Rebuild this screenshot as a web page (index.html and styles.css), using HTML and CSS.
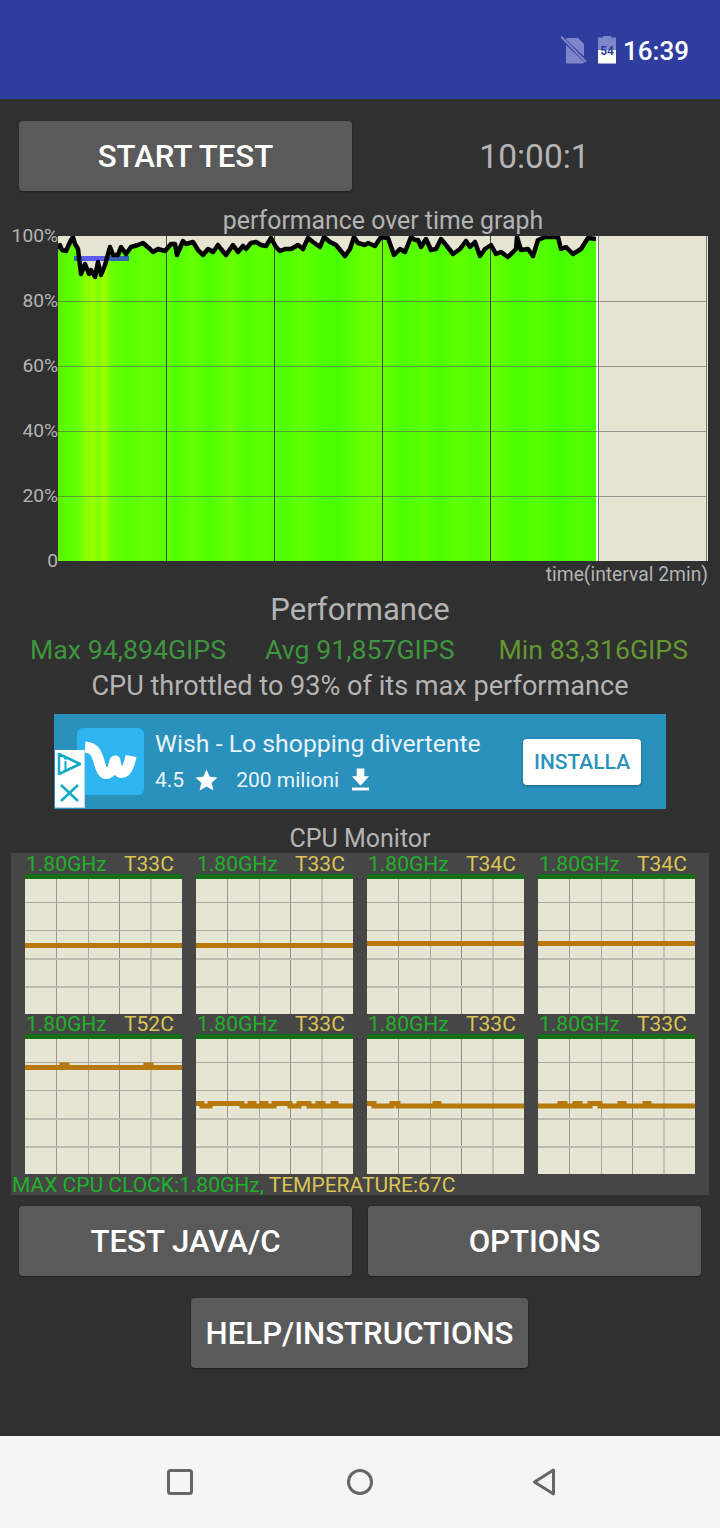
FILE: index.html
```html
<!DOCTYPE html>
<html>
<head>
	<meta charset="utf-8">
	<title>CPU Throttling Test</title>
	<link rel="stylesheet" href="styles.css">
</head>
<body>
	<div class="status">
		<svg class="nosim" width="26" height="30" viewBox="0 0 26 30">
			<path d="M6 3h11l6 6v18a1.500 1.500 0 0 1-1.500 1.500h-15a1.500 1.500 0 0 1-1.500-1.500V4.500A1.500 1.500 0 0 1 6 3z" fill="#7c86c8"/>
			<path d="M0 2.500L26 27" stroke="#2f3e9e" stroke-width="4"/>
			<path d="M0 1.500L25 27" stroke="#7c86c8" stroke-width="2"/>
		</svg>
		<div class="battery"><span class="battery-level">54</span></div>
		<span class="clock">16:39</span>
	</div>

	<div class="main">
		<div class="btn-row">
			<div class="btn">START TEST</div>
			<div class="timer">10:00:1</div>
		</div>

		<div class="graph-title">performance over time graph</div>
		<div class="graph">
			<div class="axis">
				<span>100%</span><span>80%</span><span>60%</span><span>40%</span><span>20%</span><span>0</span>
			</div>
			<svg class="plot-main" width="650" height="325" viewBox="0 0 650 325">
				<defs>
					<linearGradient id="stripes" gradientUnits="userSpaceOnUse" x1="0" y1="0" x2="538" y2="0">
						<stop offset="0" stop-color="#5ff000"/>
						<stop offset="0.02" stop-color="#58ff00"/>
						<stop offset="0.04" stop-color="#6cff00"/>
						<stop offset="0.055" stop-color="#8cff00"/>
						<stop offset="0.067" stop-color="#9aff00"/>
						<stop offset="0.075" stop-color="#7cff00"/>
						<stop offset="0.085" stop-color="#a0ff00"/>
						<stop offset="0.1" stop-color="#66ff00"/>
						<stop offset="0.13" stop-color="#58ff00"/>
						<stop offset="0.16" stop-color="#64ff00"/>
						<stop offset="0.2" stop-color="#5cff00"/>
						<stop offset="0.22" stop-color="#50ff00"/>
						<stop offset="0.25" stop-color="#66ff00"/>
						<stop offset="0.28" stop-color="#4eff00"/>
						<stop offset="0.32" stop-color="#6aff00"/>
						<stop offset="0.35" stop-color="#50ff00"/>
						<stop offset="0.38" stop-color="#60ff00"/>
						<stop offset="0.42" stop-color="#4cff00"/>
						<stop offset="0.45" stop-color="#62ff00"/>
						<stop offset="0.49" stop-color="#50ff00"/>
						<stop offset="0.52" stop-color="#48ff00"/>
						<stop offset="0.56" stop-color="#64ff00"/>
						<stop offset="0.6" stop-color="#6cff00"/>
						<stop offset="0.64" stop-color="#4cff00"/>
						<stop offset="0.68" stop-color="#5cff00"/>
						<stop offset="0.71" stop-color="#4aff00"/>
						<stop offset="0.74" stop-color="#60ff00"/>
						<stop offset="0.78" stop-color="#50ff00"/>
						<stop offset="0.81" stop-color="#68ff00"/>
						<stop offset="0.85" stop-color="#4aff00"/>
						<stop offset="0.89" stop-color="#58ff00"/>
						<stop offset="0.93" stop-color="#44ff00"/>
						<stop offset="0.97" stop-color="#52ff00"/>
						<stop offset="1" stop-color="#46ff00"/>
					</linearGradient>
				</defs>
				<rect width="650" height="325" fill="#e6e4d2"/>
				<polygon fill="url(#stripes)" points="0,13 2,9 4,14 8,15 13,4 15,1 17,8 20,13 23,38 27,28 31,38 33,34 37,41 40,26 43,39 47,29 52,11 55,19 60,19 63,11 68,18 73,11 80,9 85,7 92,13 95,16 100,13 107,15 113,8 117,8 119,19 125,5 128,8 135,6 140,14 145,19 150,13 155,16 160,9 163,13 168,19 175,9 180,16 185,10 188,13 193,7 198,6 203,9 208,10 213,2 218,11 222,15 227,13 233,13 240,9 245,13 250,2 255,6 262,11 266,1 272,6 278,9 287,20 292,13 296,1 300,7 307,9 310,7 317,10 323,1 330,2 336,19 342,13 347,16 353,1 357,4 360,4 363,11 368,3 373,14 378,13 383,3 388,9 395,18 402,13 408,5 412,11 417,6 422,20 427,13 433,9 438,18 443,16 450,21 458,13 459,1 463,14 470,13 475,20 480,4 487,1 500,1 503,13 508,11 515,18 523,13 530,2 538,3 538,325 0,325"/>
				<rect x="538" width="2" height="325" fill="#f4f4ea"/>
				<g stroke="#555" stroke-opacity="0.55" stroke-width="1">
					<path d="M0 65.500H648M0 130.500H648M0 195.500H648M0 260.500H648"/>
				</g>
				<g stroke="#444" stroke-width="1">
					<path d="M108.500 0V325M216.500 0V325M324.500 0V325M432.500 0V325"/>
				</g>
				<path d="M540.500 0V325M648.500 0V325" stroke="#777" stroke-width="1"/>
				<rect x="16" y="20" width="55" height="5" fill="#2626ff" fill-opacity="0.72"/>
				<polyline fill="none" stroke="#000" stroke-width="4.500" stroke-linejoin="round" points="0,13 2,9 4,14 8,15 13,4 15,1 17,8 20,13 23,38 27,28 31,38 33,34 37,41 40,26 43,39 47,29 52,11 55,19 60,19 63,11 68,18 73,11 80,9 85,7 92,13 95,16 100,13 107,15 113,8 117,8 119,19 125,5 128,8 135,6 140,14 145,19 150,13 155,16 160,9 163,13 168,19 175,9 180,16 185,10 188,13 193,7 198,6 203,9 208,10 213,2 218,11 222,15 227,13 233,13 240,9 245,13 250,2 255,6 262,11 266,1 272,6 278,9 287,20 292,13 296,1 300,7 307,9 310,7 317,10 323,1 330,2 336,19 342,13 347,16 353,1 357,4 360,4 363,11 368,3 373,14 378,13 383,3 388,9 395,18 402,13 408,5 412,11 417,6 422,20 427,13 433,9 438,18 443,16 450,21 458,13 459,1 463,14 470,13 475,20 480,4 487,1 500,1 503,13 508,11 515,18 523,13 530,2 538,3"/>
			</svg>
		</div>
		<div class="graph-caption">time(interval 2min)</div>

		<div class="perf-title">Performance</div>
		<div class="perf-stats">
			<span class="stat-max">Max 94,894GIPS</span>
			<span class="stat-avg">Avg 91,857GIPS</span>
			<span class="stat-min">Min 83,316GIPS</span>
		</div>
		<div class="perf-note">CPU throttled to 93% of its max performance</div>

		<div class="ad">
			<div class="ad-icon">
				<svg width="67" height="67" viewBox="0 0 67 67">
					<path d="M8 19C20 20 20 28 24 40C27 49 35 47 38 33C40 48 50 50 54 28" fill="none" stroke="#fff" stroke-width="11" stroke-linejoin="round"/>
				</svg>
			</div>
			<div class="ad-badge">
				<svg width="29" height="57" viewBox="0 0 29 57">
					<path d="M4 4L25 14L4 24z" fill="none" stroke="#12a9c4" stroke-width="2.500" stroke-linejoin="round"/>
					<path d="M10.500 11v10" stroke="#12a9c4" stroke-width="2"/>
					<circle cx="10.500" cy="8.500" r="1.300" fill="#12a9c4"/>
					<path d="M6 35L23 51M23 35L6 51" stroke="#12a9c4" stroke-width="2.500"/>
				</svg>
			</div>
			<div class="ad-text">
				<div class="ad-name">Wish - Lo shopping divertente</div>
				<div class="ad-meta">
					<span>4.5</span>
					<svg class="ad-star" width="23" height="22" viewBox="0 0 24 23">
						<path d="M12 0.500l3.400 7.600 8.100 0.800-6.100 5.500 1.800 8.100-7.200-4.200-7.200 4.200 1.800-8.100L0.500 8.900l8.100-0.800z" fill="#fff"/>
					</svg>
					<span class="ad-installs">200 milioni</span>
					<svg class="ad-dl" width="19" height="23" viewBox="0 0 20 23">
						<path d="M6 0h8v8h5l-9 10L1 8h5z" fill="#fff"/>
						<rect x="1" y="20" width="18" height="3" fill="#fff"/>
					</svg>
				</div>
			</div>
			<div class="ad-btn">INSTALLA</div>
		</div>

		<div class="cpu-title">CPU Monitor</div>
		<div class="cpu-panel">
			<div class="cpu-grid">
				<div class="cell">
					<div class="cell-head"><span class="ghz">1.80GHz</span><span class="temp">T33C</span></div>
					<div class="cell-plot"><svg width="157" height="136"><path d="M0 67.500H157" class="trace"/></svg></div>
				</div>
				<div class="cell">
					<div class="cell-head"><span class="ghz">1.80GHz</span><span class="temp">T33C</span></div>
					<div class="cell-plot"><svg width="157" height="136"><path d="M0 67.500H157" class="trace"/></svg></div>
				</div>
				<div class="cell">
					<div class="cell-head"><span class="ghz">1.80GHz</span><span class="temp">T34C</span></div>
					<div class="cell-plot"><svg width="157" height="136"><path d="M0 65.500H157" class="trace"/></svg></div>
				</div>
				<div class="cell">
					<div class="cell-head"><span class="ghz">1.80GHz</span><span class="temp">T34C</span></div>
					<div class="cell-plot"><svg width="157" height="136"><path d="M0 65.500H157" class="trace"/></svg></div>
				</div>
				<div class="cell">
					<div class="cell-head"><span class="ghz">1.80GHz</span><span class="temp">T52C</span></div>
					<div class="cell-plot"><svg width="157" height="136"><path d="M0 29.500H37V27H42V29.500H121V27H126V29.500H157" class="trace"/></svg></div>
				</div>
				<div class="cell">
					<div class="cell-head"><span class="ghz">1.80GHz</span><span class="temp">T33C</span></div>
					<div class="cell-plot"><svg width="157" height="136"><path d="M0 65.500H6V68H14V65.500H46V68H54V65.500H58V68H66V65.500H70V68H78V65.500H94V68H103V65.500H113V68H122V65.500H127V68H137V65.500H140V68H157" class="trace"/></svg></div>
				</div>
				<div class="cell">
					<div class="cell-head"><span class="ghz">1.80GHz</span><span class="temp">T33C</span></div>
					<div class="cell-plot"><svg width="157" height="136"><path d="M0 65.500H7V68H25V65.500H31V68H68V65.500H72V68H157" class="trace"/></svg></div>
				</div>
				<div class="cell">
					<div class="cell-head"><span class="ghz">1.80GHz</span><span class="temp">T33C</span></div>
					<div class="cell-plot"><svg width="157" height="136"><path d="M0 68H22V65.500H27V68H37V65.500H42V68H52V65.500H62V68H82V65.500H86V68H107V65.500H111V68H157" class="trace"/></svg></div>
				</div>
			</div>
			<div class="cpu-foot"><span class="foot-green">MAX CPU CLOCK:1.80GHz,</span> <span class="foot-yellow">TEMPERATURE:67C</span></div>
		</div>

		<div class="btn-row btn-row-low">
			<div class="btn">TEST JAVA/C</div>
			<div class="btn">OPTIONS</div>
		</div>
		<div class="btn-help-wrap">
			<div class="btn btn-help">HELP/INSTRUCTIONS</div>
		</div>
	</div>

	<div class="nav">
		<svg width="26" height="26" viewBox="0 0 26 26">
			<rect x="1.500" y="1.500" width="23" height="23" rx="2" fill="none" stroke="#666" stroke-width="3"/>
		</svg>
		<svg width="26" height="26" viewBox="0 0 26 26">
			<circle cx="13" cy="13" r="11.500" fill="none" stroke="#666" stroke-width="3"/>
		</svg>
		<svg width="30" height="28" viewBox="0 0 30 28">
			<path d="M26.500 2L7.500 14L26.500 26z" fill="none" stroke="#666" stroke-width="3" stroke-linejoin="round"/>
		</svg>
	</div>
</body>
</html>
```

FILE: styles.css
```css
*{
	margin: 0;
	padding: 0;
	box-sizing: border-box;
}

body{
	width: 720px;
	height: 1528px;
	display: flex;
	flex-direction: column;
	background: #303030;
	font-family: Roboto, "Liberation Sans", sans-serif;
	overflow: hidden;
}

/* status bar */
.status{
	height: 99px;
	background: #2f3e9e;
	display: flex;
	align-items: center;
	justify-content: flex-end;
	padding: 0 31px 0 0;
}
.nosim{
	margin-right: 11px;
}
.battery{
	width: 18px;
	height: 28px;
	margin-right: 7px;
	position: relative;
	background: linear-gradient(#7c86c8 14px, #fff 14px);
	clip-path: polygon(5px 0, 13px 0, 13px 2px, 18px 2px, 18px 28px, 0 28px, 0 2px, 5px 2px);
}
.battery-level{
	position: absolute;
	left: 0;
	right: 0;
	top: 8px;
	text-align: center;
	font-size: 12px;
	line-height: 14px;
	font-weight: 700;
	color: #2f3e9e;
}
.clock{
	color: #fff;
	font-size: 26px;
	font-weight: 500;
	line-height: 30px;
	padding-top: 2px;
}

/* main */
.main{
	flex: 1;
	padding-top: 22px;
	color: #b4b4b4;
}
.btn-row{
	display: grid;
	grid-template-columns: 333px 333px;
	column-gap: 16px;
	padding: 0 19px;
}
.btn-row-low{
	margin-top: 11px;
}
.btn{
	height: 70px;
	line-height: 72px;
	background: #5a5a5a;
	border-radius: 4px;
	box-shadow: 0 1px 2px rgba(0,0,0,0.4);
	color: #fff;
	text-align: center;
	font-size: 31.200px;
	font-weight: 500;
}
.timer{
	height: 70px;
	text-align: center;
	font-size: 33.500px;
	line-height: 72px;
}
.btn-help-wrap{
	margin-top: 22px;
	padding-right: 1px;
	display: flex;
	justify-content: center;
}
.btn-help{
	width: 337px;
}

/* graph */
.graph-title{
	margin-top: 16px;
	height: 29px;
	line-height: 27px;
	font-size: 24.850px;
	text-align: center;
	padding-left: 46px;
}
.graph{
	display: flex;
	height: 325px;
}
.axis{
	width: 58px;
	height: 325px;
	display: flex;
	flex-direction: column;
	justify-content: space-between;
	align-items: flex-end;
	font-size: 19.200px;
}
.axis span{
	height: 0;
	line-height: 0;
}
.plot-main{
	display: block;
}
.graph-caption{
	height: 31px;
	line-height: 28px;
	padding-right: 12px;
	text-align: right;
	font-size: 19.300px;
}

/* performance */
.perf-title{
	height: 36px;
	line-height: 36px;
	font-size: 31px;
	text-align: center;
}
.perf-stats{
	margin-top: 6px;
	height: 32px;
	line-height: 32px;
	display: flex;
	gap: 39px;
	padding-left: 30px;
	font-size: 26.700px;
	white-space: nowrap;
}
.stat-max, .stat-avg{
	color: #3f953f;
}
.stat-min{
	margin-left: 5px;
	color: #649632;
}
.perf-note{
	margin-top: 4px;
	height: 32px;
	line-height: 32px;
	font-size: 27.100px;
	text-align: center;
}

/* ad */
.ad{
	margin: 12px 54px 0;
	height: 95px;
	background: #2a91bd;
	display: flex;
	align-items: center;
	position: relative;
	color: #e8f4f8;
}
.ad-icon{
	width: 67px;
	height: 67px;
	margin-left: 23px;
	background: #2eb4f0;
	border-radius: 6px;
}
.ad-icon svg{
	display: block;
}
.ad-badge{
	position: absolute;
	left: 1px;
	top: 36px;
	width: 30px;
	height: 58px;
	background: #fff;
	border: 1px solid #b8dbe8;
	border-width: 0 1px 1px 0;
}
.ad-badge svg{
	display: block;
}
.ad-text{
	margin-left: 11px;
	width: 368px;
	padding-bottom: 4px;
}
.ad-name{
	font-size: 24.800px;
	line-height: 32px;
	white-space: nowrap;
}
.ad-meta{
	margin-top: 8px;
	display: flex;
	align-items: center;
	font-size: 21px;
	line-height: 24px;
}
.ad-star{
	margin-left: 11px;
}
.ad-installs{
	margin-left: 18px;
}
.ad-dl{
	margin-left: 12px;
}
.ad-btn{
	width: 118px;
	height: 46px;
	line-height: 46px;
	background: #fff;
	border-radius: 4px;
	box-shadow: 0 1px 3px rgba(0,0,0,0.35);
	color: #2a91bd;
	text-align: center;
	font-size: 21px;
	font-weight: 500;
}

/* cpu monitor */
.cpu-title{
	margin-top: 15px;
	height: 29px;
	line-height: 29px;
	font-size: 25px;
	text-align: center;
}
.cpu-panel{
	margin: 0 11px;
	height: 342px;
	padding-top: 1px;
	background: #464646;
}
.cpu-grid{
	display: grid;
	grid-template-columns: repeat(4, 157px);
	column-gap: 14px;
	padding-left: 14px;
}
.cell-head{
	height: 20px;
	line-height: 20px;
	display: flex;
	font-size: 21px;
	padding-left: 1px;
}
.ghz{
	width: 98px;
	color: #20b02a;
}
.temp{
	color: #dcc455;
}
.cell-plot{
	border-top: 4px solid #157015;
	height: 140px;
	background:
		linear-gradient(#157015, #157015) 0 0 / 100% 1px no-repeat,
		linear-gradient(#aaa9a0, #aaa9a0) 0 24px / 100% 1px no-repeat,
		linear-gradient(#aaa9a0, #aaa9a0) 0 52px / 100% 1px no-repeat,
		linear-gradient(#bdbcb0, #bdbcb0) 0 80px / 100% 2px no-repeat,
		linear-gradient(#bdbcb0, #bdbcb0) 0 108px / 100% 2px no-repeat,
		linear-gradient(#999990, #999990) 31px 0 / 1px 100% no-repeat,
		linear-gradient(#aaa9a0, #aaa9a0) 63px 0 / 1px 100% no-repeat,
		linear-gradient(#8e8e86, #8e8e86) 94px 0 / 1px 100% no-repeat,
		linear-gradient(#c4c3b6, #c4c3b6) 125px 0 / 2px 100% no-repeat,
		#e6e4d2;
}
.cell-plot svg{
	display: block;
}
.trace{
	fill: none;
	stroke: #b67a0c;
	stroke-width: 5;
}
.cpu-foot{
	height: 21px;
	line-height: 22px;
	font-size: 21px;
	padding-left: 1px;
	white-space: nowrap;
}
.foot-green{
	color: #20b02a;
}
.foot-yellow{
	color: #dcc455;
}

/* nav bar */
.nav{
	height: 92px;
	background: #f5f5f5;
	display: flex;
	align-items: center;
	gap: 154px;
	padding-left: 167px;
}
```
